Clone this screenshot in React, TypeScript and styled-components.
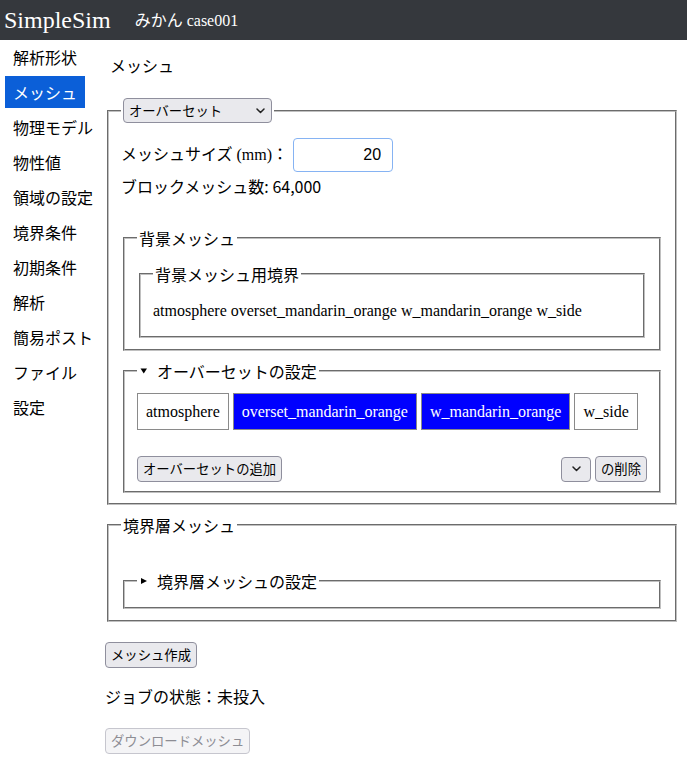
import React from 'react';
import styled, { createGlobalStyle, css } from 'styled-components';

const JP = `"Noto Sans CJK JP", sans-serif`;
const SERIF_JP = `"Liberation Serif", "Noto Sans CJK JP", serif`;

const GlobalStyle = createGlobalStyle`
  html, body {
    margin: 0;
    padding: 0;
    background: #ffffff;
    color: #000000;
    font-family: ${SERIF_JP};
  }
`;

const NAV_ITEMS = ['解析形状', 'メッシュ', '物理モデル', '物性値', '領域の設定', '境界条件', '初期条件', '解析', '簡易ポスト', 'ファイル', '設定'];
const ACTIVE_NAV = 'メッシュ';
const BOUNDARIES = ['atmosphere', 'overset_mandarin_orange', 'w_mandarin_orange', 'w_side'];
const SELECTED = ['overset_mandarin_orange', 'w_mandarin_orange'];

function Chevron() {
  return (
    <svg width="9" height="6" viewBox="0 0 9 6" fill="none">
      <path d="M1 1 L4.5 4.5 L8 1" stroke="#222" strokeWidth="1.5" strokeLinecap="round" strokeLinejoin="round" />
    </svg>
  );
}

// details/summary の開閉マーカー
function Marker({ open }: { open?: boolean }) {
  return (
    <MarkerBox>
      <svg width="8" height="8" viewBox="0 0 8 8">
        {open ? <path d="M0.5 1.5 H7 L3.75 6.5 Z" fill="#000" /> : <path d="M1 1 L7 4 L1 7 Z" fill="#000" />}
      </svg>
    </MarkerBox>
  );
}

function App() {
  return (
    <>
      <GlobalStyle />
      <Header>
        <Brand>SimpleSim</Brand>
        <CaseName>みかん case001</CaseName>
      </Header>
      <Body>
        <Sidebar>
          {NAV_ITEMS.map((item) => (
            <NavItem key={item} active={item === ACTIVE_NAV}>
              {item}
            </NavItem>
          ))}
        </Sidebar>
        <Main>
          <Title>メッシュ</Title>

          <Fieldset top={23}>
            <Legend>
              <SelectBox width={149}>
                <span>オーバーセット</span>
                <Chevron />
              </SelectBox>
            </Legend>
            <SizeRow>
              <Label>
                メッシュサイズ <Paren>(mm)</Paren>：
              </Label>
              <SizeInput value="20" readOnly />
            </SizeRow>
            <Info>ブロックメッシュ数: 64,000</Info>

            <Fieldset top={32} bottom={11}>
              <Legend>
                <LegendText>背景メッシュ</LegendText>
              </Legend>
              <Fieldset top={16} bottom={15}>
                <Legend>
                  <LegendText>背景メッシュ用境界</LegendText>
                </Legend>
                <BoundaryText>{BOUNDARIES.join(' ')}</BoundaryText>
              </Fieldset>
            </Fieldset>

            <Fieldset top={10} bottom={9}>
              <Legend>
                <LegendText>
                  <Marker open />
                  オーバーセットの設定
                </LegendText>
              </Legend>
              <Chips>
                {BOUNDARIES.map((b) => (
                  <Chip key={b} selected={SELECTED.includes(b)}>
                    {b}
                  </Chip>
                ))}
              </Chips>
              <ActionRow>
                <Button>オーバーセットの追加</Button>
                <RightGroup>
                  <SelectBox width={30} center>
                    <Chevron />
                  </SelectBox>
                  <Button>の削除</Button>
                </RightGroup>
              </ActionRow>
            </Fieldset>
          </Fieldset>

          <Fieldset top={10} bottom={11}>
            <Legend>
              <LegendText>境界層メッシュ</LegendText>
            </Legend>
            <Fieldset top={36} bottom={16}>
              <Legend>
                <LegendText>
                  <Marker />
                  境界層メッシュの設定
                </LegendText>
              </Legend>
            </Fieldset>
          </Fieldset>

          <Button top={20}>メッシュ作成</Button>
          <Status>ジョブの状態：未投入</Status>
          <Button disabled>ダウンロードメッシュ</Button>
        </Main>
      </Body>
    </>
  );
}

const Header = styled.header`
  display: flex;
  align-items: center;
  height: 40px;
  padding-left: 4px;
  background-color: #35383d;
  color: #ffffff;
`;
const Brand = styled.div`
  font-family: "Liberation Serif", serif;
  font-size: 24px;
  line-height: 28px;
  margin-right: 24px;
`;
const CaseName = styled.div`
  font-family: ${SERIF_JP};
  font-size: 16px;
  line-height: 20px;
  padding-top: 2px;
`;
const Body = styled.div`
  display: flex;
  align-items: flex-start;
`;
const Sidebar = styled.nav`
  display: flex;
  flex-direction: column;
  gap: 3px;
  width: 100px;
  padding: 1px 0 0 5px;
  flex-shrink: 0;
`;
const NavItem = styled.div<{ active?: boolean }>`
  width: 80px;
  height: 32px;
  box-sizing: border-box;
  padding-left: 8px;
  display: flex;
  align-items: center;
  font-family: ${JP};
  font-size: 16px;
  color: #000000;
  white-space: nowrap;

  ${({ active }) =>
    active &&
    css`
      background-color: #0b5fd8;
      color: #ffffff;
    `}
`;
const Main = styled.main`
  width: 574px;
  display: flex;
  flex-direction: column;
  align-items: flex-start;
`;
const Title = styled.div`
  margin: 15px 0 0 5px;
  font-family: ${JP};
  font-size: 16px;
  line-height: 20px;
`;
const Fieldset = styled.fieldset<{ top?: number; bottom?: number }>`
  align-self: stretch;
  margin: ${({ top }) => top ?? 0}px 2px 0;
  padding: 0 12px ${({ bottom }) => bottom ?? 10}px;
  border: 2px groove #c0c0c0;
  min-width: 0;
`;
const Legend = styled.legend`
  padding: 0 2px;
`;
const LegendText = styled.span`
  display: flex;
  align-items: center;
  height: 20px;
  font-family: ${JP};
  font-size: 16px;
  line-height: 20px;
`;
const MarkerBox = styled.span`
  display: inline-flex;
  align-items: center;
  width: 17px;
  height: 20px;
  padding-left: 1px;
`;
const SelectBox = styled.div<{ width: number; center?: boolean }>`
  box-sizing: border-box;
  width: ${({ width }) => width}px;
  height: 25px;
  display: flex;
  align-items: center;
  justify-content: ${({ center }) => (center ? 'center' : 'space-between')};
  padding: ${({ center }) => (center ? '0' : '0 6px 0 5px')};
  background-color: #e9e9ed;
  border: 1px solid #8f8f9d;
  border-radius: 4px;
  font-family: ${JP};
  font-size: 13.33px;
  line-height: 18px;
  color: #000000;
`;
const SizeRow = styled.div`
  display: flex;
  align-items: center;
  margin-top: 15px;
`;
const Label = styled.span`
  font-family: ${SERIF_JP};
  font-size: 16px;
  line-height: 20px;
  margin-right: 5px;
`;
const Paren = styled.span`
  font-family: "Liberation Serif", serif;
`;
const SizeInput = styled.input`
  box-sizing: border-box;
  width: 100px;
  height: 34px;
  padding: 0 11px;
  border: 1px solid #86b3f3;
  border-radius: 4px;
  text-align: right;
  font-family: "Liberation Sans", sans-serif;
  font-size: 16px;
  color: #000000;
  outline: none;
`;
const Info = styled.div`
  margin-top: 4px;
  font-family: ${JP};
  font-size: 16px;
  line-height: 20px;
`;
const BoundaryText = styled.div`
  margin-top: 17px;
  font-family: "Liberation Serif", serif;
  font-size: 16px;
  line-height: 20px;
`;
const Chips = styled.div`
  display: flex;
  gap: 4px;
  margin-top: 12px;
`;
const Chip = styled.div<{ selected?: boolean }>`
  box-sizing: border-box;
  height: 37px;
  display: flex;
  align-items: center;
  padding: 0 8px;
  border: 1px solid #8a8a8a;
  font-family: "Liberation Serif", serif;
  font-size: 16px;
  background-color: ${({ selected }) => (selected ? '#0000ff' : '#ffffff')};
  color: ${({ selected }) => (selected ? '#ffffff' : '#000000')};
`;
const ActionRow = styled.div`
  display: flex;
  justify-content: space-between;
  align-items: center;
  margin-top: 26px;
`;
const RightGroup = styled.div`
  display: flex;
  align-items: center;
  gap: 4px;
`;
const Button = styled.button<{ top?: number }>`
  box-sizing: border-box;
  height: 26px;
  margin-top: ${({ top }) => top ?? 0}px;
  padding: 0 5px;
  background-color: #e9e9ed;
  border: 1px solid #8f8f9d;
  border-radius: 4px;
  font-family: ${JP};
  font-size: 13.33px;
  line-height: 18px;
  color: #000000;

  &:disabled {
    margin-top: 22px;
    background-color: #f4f4f6;
    border-color: #c6c6ce;
    color: #8d8d94;
  }
`;
const Status = styled.div`
  margin-top: 18px;
  font-family: ${JP};
  font-size: 16px;
  line-height: 20px;
`;

Header.displayName = 'Header';
Sidebar.displayName = 'Sidebar';
NavItem.displayName = 'NavItem';
Main.displayName = 'Main';
Fieldset.displayName = 'Fieldset';
Chip.displayName = 'Chip';
Button.displayName = 'Button';
MarkerBox.displayName = 'MarkerBox';

export default App;
